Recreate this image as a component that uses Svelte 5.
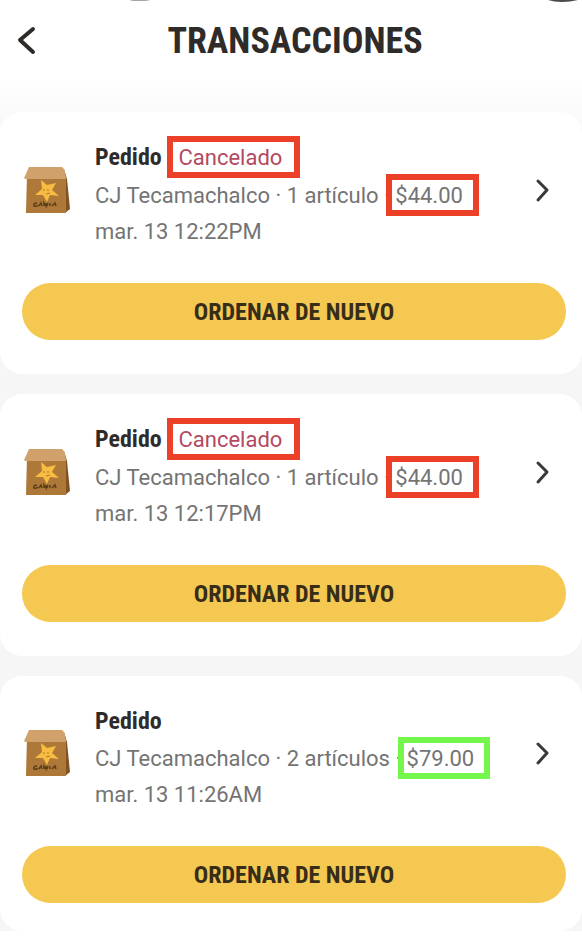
<script>
  const orders = [
    { id: 1, store: "CJ Tecamachalco", items: "1 artículo", total: "$44.00", date: "mar. 13 12:22PM", cancelled: true },
    { id: 2, store: "CJ Tecamachalco", items: "1 artículo", total: "$44.00", date: "mar. 13 12:17PM", cancelled: true },
    { id: 3, store: "CJ Tecamachalco", items: "2 artículos", total: "$79.00", date: "mar. 13 11:26AM", cancelled: false }
  ];
</script>

<div class="page">
  <div class="statusbar">
    <svg width="20" height="2" viewBox="0 0 20 2">
      <path d="M0 0 H20 Q18 1 14 1 H4 Q1 1 0 0 Z" fill="#a5a3a3" />
    </svg>
    <svg width="30" height="2" viewBox="0 0 30 2">
      <path d="M0 0 H30 Q22 2 14 2 Q6 2 0 0 Z" fill="#4a4848" />
    </svg>
  </div>
  <header>
    <button class="back" aria-label="Regresar">
      <svg width="20" height="32" viewBox="0 0 20 32">
        <path d="M17 4 L4 15 L17 27" fill="none" stroke="#2f2b29" stroke-width="4" stroke-linecap="round" stroke-linejoin="round" />
      </svg>
    </button>
    <h1>TRANSACCIONES</h1>
  </header>

  <main>
    {#each orders as order (order.id)}
      <article class="card">
        <div class="row">
          <svg class="bag" width="50" height="52" viewBox="0 0 50 52">
            <path d="M42 5 L45 15 L48 45 L43 49 Z" fill="#815323" />
            <path d="M5 10 H44 L44 49 H4 Z" fill="#ad7838" />
            <path d="M7 3 H40 Q43 4 44 15 H4 Q1 15 3 12 Z" fill="#d0a16b" />
            <path d="M19 16 L25 21 L34 19 L30 26 L37 32 L28 31 L25 38 L21 31 L13 31 L20 25 Z" fill="#f6bd42" />
            <path d="M22 25 V27 M26 25 V27 M24 30 L28 29" stroke="#b87328" stroke-width="1" />
            <path d="M15 39 Q11 39 12 42 Q14 43 16 41 M17 42 L19 39 L20 42 M22 42 V39 L24 42 V39 M26 39 L25 42 M28 39 V42 M30 42 L33 39 L34 42" fill="none" stroke="#5c4019" stroke-width="1.5" />
          </svg>
          <div class="info">
            <h2>
              Pedido
              {#if order.cancelled}
                <span class="status">· <span class="mark wide">Cancelado</span></span>
              {/if}
            </h2>
            <p>{order.store} · {order.items} · <span class="mark" class:ok={!order.cancelled}>{order.total}</span></p>
            <p>{order.date}</p>
          </div>
          <button class="open" aria-label="Ver pedido">
            <svg width="16" height="26" viewBox="0 0 16 26">
              <path d="M4 4 L13 13 L4 23" fill="none" stroke="#3b3938" stroke-width="3" stroke-linecap="round" stroke-linejoin="round" />
            </svg>
          </button>
        </div>
        <button class="reorder">ORDENAR DE NUEVO</button>
      </article>
    {/each}
  </main>
</div>

<style>
  :global(body) {
    margin: 0;
    background: #fff;
  }
  .page {
    font-family: Roboto, "Liberation Sans", sans-serif;
    color: #2f2b29;
  }
  h1, h2, p {
    margin: 0;
  }
  button {
    padding: 0;
    border: none;
    background: none;
    color: inherit;
    cursor: pointer;
  }
  svg {
    display: block;
  }
  .statusbar {
    display: flex;
    justify-content: space-between;
    height: 2px;
    padding: 0 4px 0 130px;
  }
  header {
    display: grid;
    grid-template-columns: 36px 1fr 32px;
    align-items: center;
    height: 78px;
    padding: 0 12px 0 16px;
  }
  .back {
    justify-self: start;
  }
  h1, h2, .reorder {
    font-family: "Roboto Condensed", "Open Sans Condensed", "Liberation Sans Narrow", sans-serif;
    font-weight: 700;
  }
  h1 {
    text-align: center;
    font-size: 36px;
    line-height: 48px;
  }
  main {
    display: flex;
    flex-direction: column;
    gap: 20px;
    padding-top: 32px;
    background: linear-gradient(#fff, #fafafa 32px, #f6f6f6 300px);
  }
  .card {
    padding: 25px 16px 34px 22px;
    border-radius: 22px;
    background: #fff;
  }
  .card:last-child {
    padding-bottom: 28px;
  }
  .row {
    display: flex;
    align-items: center;
    margin-bottom: 33px;
  }
  .bag, .open {
    flex: none;
    margin-bottom: 8px;
  }
  .bag {
    margin-right: 23px;
  }
  .info {
    flex: 1;
    white-space: nowrap;
  }
  h2 {
    font-size: 24px;
    line-height: 40px;
  }
  p, .status {
    font-family: Roboto, "Liberation Sans", sans-serif;
    font-size: 22px;
    font-weight: 400;
  }
  p {
    line-height: 36px;
    color: #747474;
  }
  .status {
    color: #b34a60;
  }
  .mark {
    position: relative;
  }
  .mark::after {
    content: "";
    position: absolute;
    inset: -9px -16px -8px -9px;
    border: 6px solid #ec4128;
  }
  .wide::after {
    inset: -9px -18px -8px -12px;
  }
  .ok::after {
    border-color: #74f74a;
  }
  .open {
    padding: 0 16px;
  }
  .reorder {
    width: 100%;
    height: 57px;
    border-radius: 29px;
    background: #f5c951;
    color: #372d18;
    font-size: 24px;
  }
</style>
